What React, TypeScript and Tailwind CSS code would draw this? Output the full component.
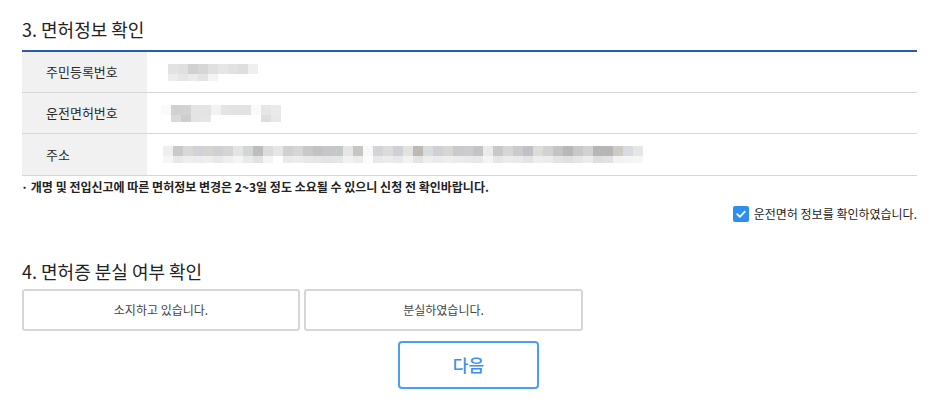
import React from 'react';

const FONT = { fontFamily: '"Noto Sans CJK KR", "Noto Sans", sans-serif' };

// pixel mosaic standing in for the redacted values
type Mosaic = { top: string[]; bottom: string[] };

const rrn: Mosaic = {
  top: ['#e2e2e2', '#dfdfdf', '#d0d0d0', '#d6d6d6', '#e0e0e0', '#e6e6e6', '#e2e2e2', '#dedede', '#efefef'],
  bottom: ['#ececec', '#e6e6e6', '#ebebeb', '#e3e3e3', '#f4f4f4'],
};

const license: Mosaic = {
  top: ['#fafafa', '#d1d1d1', '#d2d2d4', '#e4e4e4', '#e2e4e4', '#f2f2f2', '#e4e4e4', '#e2e2e2', '#e2e2e2', '#fafafa', '#e6e6e6', '#eaeaea'],
  bottom: ['#ffffff', '#dadada', '#cdcdcd', '#e4e4e4', '#e6e6e6', '#ffffff', '#ffffff', '#ffffff', '#ffffff', '#ffffff', '#dedede', '#e8e8e8'],
};

const address: Mosaic = {
  top: [
    '#efefef', '#c9c9c9', '#d8d8d8', '#d2d2d6', '#d6d4d0', '#d0d0d2', '#d4d4d4', '#e4e4e6', '#d2d6d6', '#bdbdbd',
    '#dcdcdc', '#e6e6e8', '#d0d0d0', '#d6d6d6', '#c8c8c8', '#c2c2c2', '#c6c6ca', '#c4c8c8', '#e6e6e6', '#c6c6c2',
    '#f8f8f8', '#d4d4d8', '#dcdcdc', '#ced2d6', '#e4e2de', '#bcb8b4', '#d8dcdc', '#d0d0d4', '#d6d6d2', '#cacacc',
    '#ccccd0', '#c4c4c8', '#eaeae8', '#c8c8c8', '#d6d6d6', '#cacccc', '#c0c0c6', '#dcdcd8', '#d2d2d2', '#c4c4c4',
    '#b8b8b8', '#c8c8ca', '#d2d2d2', '#b6b6b8', '#b6b6b6', '#cecac6', '#d8dce0', '#e6e6e6',
  ],
  bottom: [
    '#f6f6f6', '#e8e8e8', '#eeeeee', '#ececf0', '#eeeeee', '#e8e8e8', '#eeeeee', '#f4f4f4', '#eaeaea', '#e2e2e2',
    '#f4f4f4', '#ffffff', '#eaeaea', '#ececec', '#e8e8e8', '#e6e6e6', '#e4e4e4', '#e6e6e6', '#f2f2f2', '#ececec',
    '#fcfcfc', '#e8e8ea', '#ececec', '#e8e8ec', '#f2f2f0', '#e4e4e4', '#eeeeee', '#eaeaea', '#eeeeee', '#ececec',
    '#eaeaea', '#e8e8e8', '#f4f4f4', '#e6e6e6', '#ececec', '#eaeaea', '#e4e4e4', '#eeeeee', '#ececec', '#e4e4e4',
    '#e0e0e0', '#e6e6e6', '#ececec', '#dedede', '#e2e2e2', '#f2f2f2', '#f4f4f4', '#f6f6f6',
  ],
};

function MosaicBlock({ data }: { data: Mosaic }) {
  return (
    <div className="flex flex-col">
      <div className="flex">
        {data.top.map((c, i) => (
          <span key={i} className="block h-[10px] w-[10px]" style={{ backgroundColor: c }} />
        ))}
      </div>
      <div className="flex">
        {data.bottom.map((c, i) => (
          <span key={i} className="block h-[7px] w-[10px]" style={{ backgroundColor: c }} />
        ))}
      </div>
    </div>
  );
}

function InfoRow({ label, value, last }: { label: string; value: React.ReactNode; last?: boolean }) {
  return (
    <div className={`flex h-[41px] ${last ? '' : 'border-b border-[#d6d6d6]'}`}>
      <div className="flex w-[125px] shrink-0 items-center bg-[#f1f1f1] pl-[24px] text-[13px] text-[#2a2a2a]">
        {label}
      </div>
      <div className="flex flex-1 items-center pl-[20px]">{value}</div>
    </div>
  );
}

export default function App() {
  return (
    <div className="min-h-[412px] w-[935px] bg-white pl-[22px] pr-[18px] pt-[16px]" style={FONT}>
      <h2 className="text-[18px] leading-[26px] text-[#222]">3. 면허정보 확인</h2>

      <div className="mt-[8px] border-t-2 border-b border-t-[#2a5caa] border-b-[#d6d6d6]">
        <InfoRow label="주민등록번호" value={<div className="pl-[1px] pt-[1px]"><MosaicBlock data={rrn} /></div>} />
        <InfoRow label="운전면허번호" value={<div className="-ml-[6px]"><MosaicBlock data={license} /></div>} />
        <InfoRow label="주소" value={<div className="-ml-[4px]"><MosaicBlock data={address} /></div>} last />
      </div>

      <p className="-ml-[1px] mt-[2px] text-[12px] font-bold leading-[18px] text-[#222]">
        · 개명 및 전입신고에 따른 면허정보 변경은 2~3일 정도 소요될 수 있으니 신청 전 확인바랍니다.
      </p>

      <div className="mt-[10px] flex items-center justify-end gap-[5px]">
        <span className="flex h-[16px] w-[16px] items-center justify-center rounded-[2px] bg-[#2e8ef0]">
          <svg width="12" height="12" viewBox="0 0 12 12" fill="none">
            <path d="M2.2 6.2 L4.9 8.8 L9.8 3.6" stroke="white" strokeWidth="1.8" strokeLinecap="round" strokeLinejoin="round" />
          </svg>
        </span>
        <span className="text-[12px] leading-[16px] text-[#222]">운전면허 정보를 확인하였습니다.</span>
      </div>

      <h2 className="mt-[36px] text-[18px] leading-[26px] text-[#222]">4. 면허증 분실 여부 확인</h2>

      <div className="mt-[5px] flex gap-[4px]">
        <button className="h-[42px] w-[278px] rounded-[3px] border-2 border-[#d6d6d6] bg-white text-[12px] text-[#444]">
          소지하고 있습니다.
        </button>
        <button className="h-[42px] w-[279px] rounded-[3px] border-2 border-[#d6d6d6] bg-white text-[12px] text-[#444]">
          분실하였습니다.
        </button>
      </div>

      <div className="mt-[10px] flex pl-[376px]">
        <button className="h-[48px] w-[141px] rounded-[4px] border-2 border-[#4a9ef8] bg-white text-[17px] font-medium text-[#3d8ef0]">
          다음
        </button>
      </div>
    </div>
  );
}
